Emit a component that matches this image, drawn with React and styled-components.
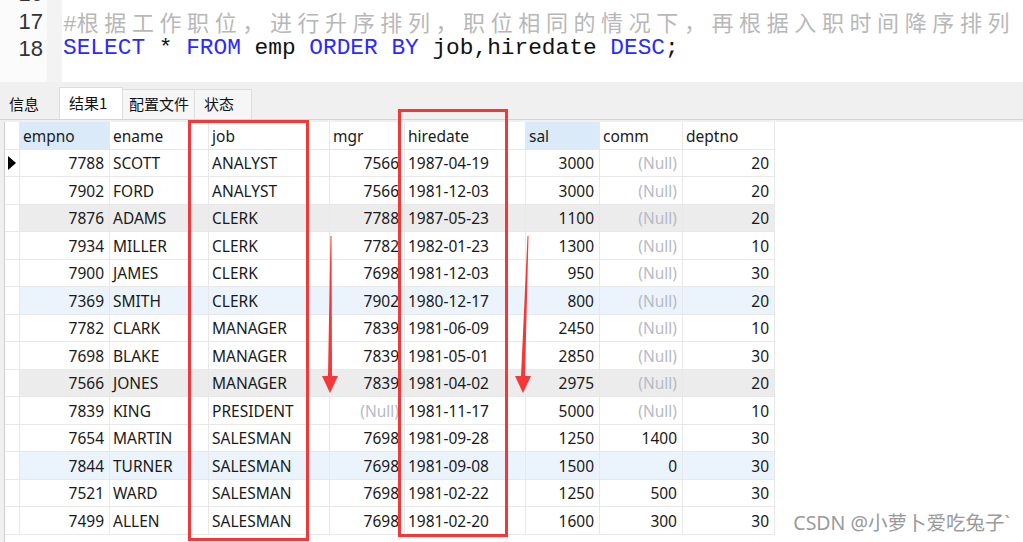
import React from 'react';
import styled, { createGlobalStyle } from 'styled-components';

const GlobalStyle = createGlobalStyle`
    html, body {
        margin: 0;
        padding: 0;
        background: #fff;
    }
    body {
        width: 1023px;
        height: 542px;
        overflow: hidden;
        font-family: "Noto Sans", "Noto Sans CJK SC", sans-serif;
    }
`;

const Page = styled.div`
    position: relative;
    width: 1023px;
    height: 542px;
    overflow: hidden;
    display: flex;
    flex-direction: column;
    background: #f0f0f0;
`;

const Editor = styled.div`
    height: 82px;
    flex: none;
    display: flex;
    background: #fff;
    overflow: hidden;
`;

const Gutter = styled.div`
    width: 47px;
    flex: none;
    background: #fbfbfb;
    border-right: 15px solid #f3f3f3;
    margin-top: -20px;
`;

const LineNo = styled.div`
    height: 27.5px;
    line-height: 27.5px;
    padding-right: 4px;
    text-align: right;
    font-family: "Liberation Sans", Arial, sans-serif;
    font-size: 22px;
    color: #333;
`;

const Code = styled.div`
    flex: 1;
    margin-top: -20px;
    padding-left: 1px;
    font-family: "Liberation Mono", "Courier New", monospace;
    font-size: 22.8px;
    white-space: pre;
`;

const CodeLine = styled.div`
    height: 27.5px;
    line-height: 27.5px;
    color: #111;
`;

const Keyword = styled.span`
    color: #2a2aff;
`;

const Comment = styled.span`
    color: #b8b8b8;
    font-family: "Noto Sans CJK SC", sans-serif;
    font-size: 22px;
    line-height: 27.5px;
    letter-spacing: 5.6px;
`;

const Hash = styled.span`
    color: #b8b8b8;
`;

const TabBar = styled.div`
    height: 37px;
    flex: none;
    display: flex;
    align-items: flex-end;
    border-bottom: 1px solid #d4d4d4;
`;

const Tab = styled.div`
    width: ${p => p.$w}px;
    height: ${p => (p.$active ? '32px' : '30px')};
    padding: 0 0 2px ${p => p.$pad}px;
    display: flex;
    align-items: center;
    box-sizing: border-box;
    font-family: "Noto Sans CJK SC", sans-serif;
    font-size: 15px;
    color: #111;
    background: ${p => (p.$active ? '#fff' : p.$plain ? 'transparent' : '#f6f6f6')};
    border: 1px solid ${p => (p.$plain ? 'transparent' : '#dedede')};
    border-bottom: none;
    margin-right: -1px;
`;

const GridWrap = styled.div`
    flex: 1;
    display: flex;
    padding: 2px 0 0 4px;
`;

const Grid = styled.div`
    flex: 1;
    background: #fff;
    border-left: 1px solid #cfcfcf;
    display: grid;
    grid-template-columns: 15px 90px 99px 121px 75px 121px 74px 83px 92px 1fr;
    grid-auto-rows: 27.5px;
    align-content: start;
    font-family: "Noto Sans", sans-serif;
    font-size: 15.5px;
    color: #1a1a1a;
`;

const Cell = styled.div`
    box-sizing: border-box;
    border-right: ${p => (p.$last ? 'none' : '1px solid #e8e8e8')};
    border-bottom: ${p => (p.$last ? 'none' : '1px solid #e8e8e8')};
    background: ${p => p.$bg || 'transparent'};
    display: flex;
    align-items: center;
    justify-content: ${p => (p.$right ? 'flex-end' : 'flex-start')};
    padding: ${p => (p.$right ? '1px 5px 0 0' : '1px 0 0 3px')};
    white-space: nowrap;
    overflow: hidden;
    color: ${p => (p.$null ? '#b7b9c6' : 'inherit')};
`;

const HeadCell = styled(Cell)`
    height: 28px;
    padding-left: 3px;
`;

const Pointer = styled.div`
    width: 0;
    height: 0;
    border-top: 7px solid transparent;
    border-bottom: 7px solid transparent;
    border-left: 8px solid #000;
`;

const RedBox = styled.div`
    position: absolute;
    box-sizing: border-box;
    border: 3px solid #f23838;
`;

const Arrow = styled.svg`
    position: absolute;
    left: 0;
    top: 0;
    overflow: visible;
`;

const Watermark = styled.div`
    position: absolute;
    right: 13px;
    bottom: 6px;
    font-family: "Noto Sans", "Noto Sans CJK SC", sans-serif;
    font-size: 19.5px;
    color: #9a9a9a;
`;

const columns = [
    { key: 'empno', right: true },
    { key: 'ename' },
    { key: 'job' },
    { key: 'mgr', right: true },
    { key: 'hiredate' },
    { key: 'sal', right: true },
    { key: 'comm', right: true },
    { key: 'deptno', right: true },
];

const rows = [
    [7788, 'SCOTT', 'ANALYST', 7566, '1987-04-19', 3000, null, 20],
    [7902, 'FORD', 'ANALYST', 7566, '1981-12-03', 3000, null, 20],
    [7876, 'ADAMS', 'CLERK', 7788, '1987-05-23', 1100, null, 20],
    [7934, 'MILLER', 'CLERK', 7782, '1982-01-23', 1300, null, 10],
    [7900, 'JAMES', 'CLERK', 7698, '1981-12-03', 950, null, 30],
    [7369, 'SMITH', 'CLERK', 7902, '1980-12-17', 800, null, 20],
    [7782, 'CLARK', 'MANAGER', 7839, '1981-06-09', 2450, null, 10],
    [7698, 'BLAKE', 'MANAGER', 7839, '1981-05-01', 2850, null, 30],
    [7566, 'JONES', 'MANAGER', 7839, '1981-04-02', 2975, null, 20],
    [7839, 'KING', 'PRESIDENT', null, '1981-11-17', 5000, null, 10],
    [7654, 'MARTIN', 'SALESMAN', 7698, '1981-09-28', 1250, 1400, 30],
    [7844, 'TURNER', 'SALESMAN', 7698, '1981-09-08', 1500, 0, 30],
    [7521, 'WARD', 'SALESMAN', 7698, '1981-02-22', 1250, 500, 30],
    [7499, 'ALLEN', 'SALESMAN', 7698, '1981-02-20', 1600, 300, 30],
];

const rowBg = i => {
    if (i === 2 || i === 8) return '#ececec';
    if (i === 5 || i === 11) return '#ebf4fd';
    return null;
};

const headBg = { empno: '#dbeaf8', sal: '#dbeaf8' };

function DownArrow({ x1, x2, top, bottom }) {
    const head = bottom - 17;
    return (
        <Arrow width="1" height="1">
            <polygon
                points={`${x1 - 0.5},${top} ${x1 + 0.5},${top} ${x2 + 2},${head} ${x2 - 2},${head}`}
                fill="#f23838"
            />
            <polygon points={`${x2 - 8},${head} ${x2 + 8},${head} ${x2},${bottom}`} fill="#f23838" />
        </Arrow>
    );
}

export default function App() {
    return (
        <>
            <GlobalStyle />
            <Page>
                <Editor>
                    <Gutter>
                        <LineNo>16</LineNo>
                        <LineNo>17</LineNo>
                        <LineNo>18</LineNo>
                    </Gutter>
                    <Code>
                        <CodeLine> </CodeLine>
                        <CodeLine>
                            <Hash>#</Hash>
                            <Comment>根据工作职位，进行升序排列，职位相同的情况下，再根据入职时间降序排列</Comment>
                        </CodeLine>
                        <CodeLine>
                            <Keyword>SELECT</Keyword> * <Keyword>FROM</Keyword> emp <Keyword>ORDER</Keyword>{' '}
                            <Keyword>BY</Keyword> job,hiredate <Keyword>DESC</Keyword>;
                        </CodeLine>
                    </Code>
                </Editor>
                <TabBar>
                    <Tab $plain $w={60} $pad={8}>信息</Tab>
                    <Tab $active $w={64} $pad={9}>结果1</Tab>
                    <Tab $w={73} $pad={6}>配置文件</Tab>
                    <Tab $w={58} $pad={9}>状态</Tab>
                </TabBar>
                <GridWrap>
                    <Grid>
                        <HeadCell />
                        {columns.map(c => (
                            <HeadCell key={c.key} $bg={headBg[c.key]}>
                                {c.key}
                            </HeadCell>
                        ))}
                        <HeadCell $last />
                        {rows.map((r, i) => (
                            <React.Fragment key={r[0]}>
                                <Cell>{i === 0 && <Pointer />}</Cell>
                                {r.map((v, j) => (
                                    <Cell
                                        key={columns[j].key}
                                        $right={columns[j].right || v === null}
                                        $null={v === null}
                                        $bg={rowBg(i)}
                                    >
                                        {v === null ? '(Null)' : v}
                                    </Cell>
                                ))}
                                <Cell $last />
                            </React.Fragment>
                        ))}
                    </Grid>
                </GridWrap>
                <RedBox style={{ left: 188, top: 120, width: 121, height: 421 }} />
                <RedBox style={{ left: 398, top: 109, width: 110, height: 428 }} />
                <DownArrow x1={331} x2={330} top={236} bottom={393} />
                <DownArrow x1={528} x2={523} top={236} bottom={393} />
                <Watermark>CSDN @小萝卜爱吃兔子`</Watermark>
            </Page>
        </>
    );
}
